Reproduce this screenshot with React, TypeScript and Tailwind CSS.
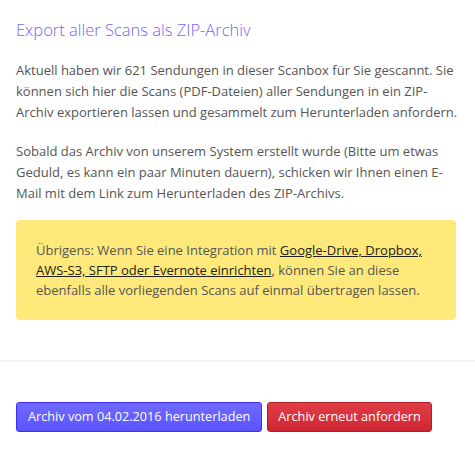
export default function App() {
  return (
    <div className="min-h-screen bg-white font-['Open_Sans',sans-serif] text-[#555]">
      <div className="px-4 pt-[18px]">
        <h2 className="mb-[18px] text-[16.5px] font-light leading-6 text-[#7566f5]">
          Export aller Scans als ZIP-Archiv
        </h2>
        <p className="mb-[18px] text-[13px] leading-[21px]">
          Aktuell haben wir 621 Sendungen in dieser Scanbox für Sie gescannt. Sie
          können sich hier die Scans (PDF-Dateien) aller Sendungen in ein ZIP-Archiv
          exportieren lassen und gesammelt zum Herunterladen anfordern.
        </p>
        <p className="text-[13px] leading-[21px]">
          Sobald das Archiv von unserem System erstellt wurde (Bitte um etwas Geduld,
          es kann ein paar Minuten dauern), schicken wir Ihnen einen E-Mail mit dem
          Link zum Herunterladen des ZIP-Archivs.
        </p>
        <div className="mt-4 w-[440px] rounded bg-[#fee97a] px-5 py-5 text-[13px] leading-5">
          Übrigens: Wenn Sie eine Integration mit{" "}
          <a href="#" className="text-[#222] underline">
            Google-Drive, Dropbox, AWS-S3, SFTP oder Evernote einrichten
          </a>
          , können Sie an diese ebenfalls alle vorliegenden Scans auf einmal übertragen
          lassen.
        </div>
      </div>
      <div className="mt-10 h-[2px] bg-[#f1f1f1]" />
      <div className="flex gap-[5px] px-4 pt-10">
        <button className="h-[30px] rounded-[3px] border border-[#3b2eff] bg-gradient-to-b from-[#716aff] to-[#5b52ff] px-[11px] text-[12.7px] text-white">
          Archiv vom 04.02.2016 herunterladen
        </button>
        <button className="h-[30px] rounded-[3px] border border-[#b01e28] bg-gradient-to-b from-[#e13d47] to-[#cf2631] px-[10px] text-[12.7px] text-white">
          Archiv erneut anfordern
        </button>
      </div>
    </div>
  );
}
